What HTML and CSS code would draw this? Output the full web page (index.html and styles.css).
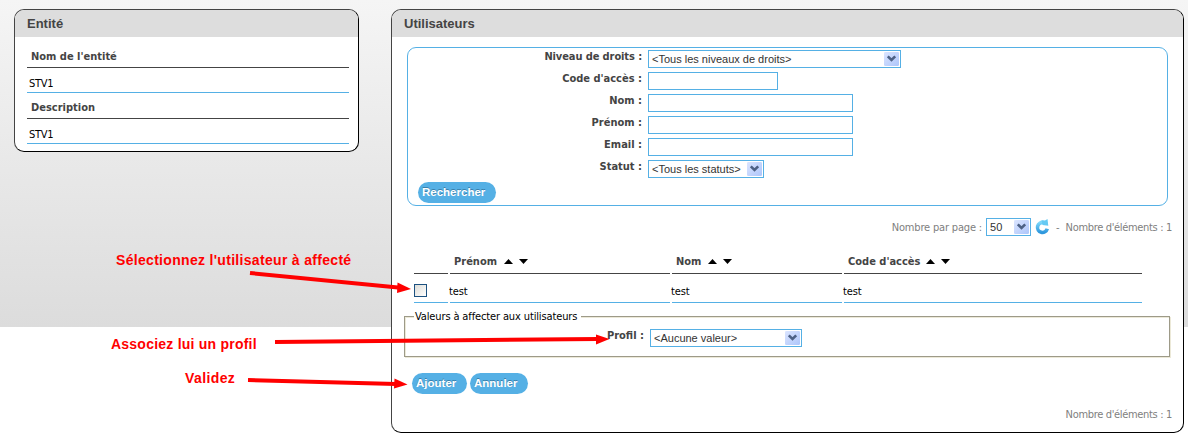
FILE: index.html
```html
<!DOCTYPE html>
<html lang="fr">
<head>
<meta charset="utf-8">
<title>Utilisateurs</title>
<link rel="stylesheet" href="styles.css">
</head>
<body>
<svg class="defs" width="0" height="0"><defs>
<linearGradient id="face" x1="0" y1="0" x2="1" y2="1"><stop offset="0" stop-color="#dbe5ff"/><stop offset="1" stop-color="#adc5fa"/></linearGradient>
<linearGradient id="blue" x1="0" y1="0" x2="0" y2="1"><stop offset="0" stop-color="#7ed7fa"/><stop offset="1" stop-color="#2f98dd"/></linearGradient>
<symbol id="drop" viewBox="0 0 15 14"><rect width="15" height="14" rx="1.2" fill="url(#face)"/><path d="M3.8 4.3 7.5 8l3.7-3.7" fill="none" stroke="#4d6185" stroke-width="2.6"/></symbol>
<symbol id="up" viewBox="0 0 9 5"><path d="M0 5 4.500 0 9 5z"/></symbol>
<symbol id="down" viewBox="0 0 9 5"><path d="M0 0h9L4.500 5z"/></symbol>
</defs></svg>
<main class="page">
  <section class="panel entity">
    <h2 class="title">Entité</h2>
    <dl class="facts">
      <dt>Nom de l'entité</dt><dd>STV1</dd>
      <dt>Description</dt><dd>STV1</dd>
    </dl>
  </section>
  <section class="panel users">
    <h2 class="title">Utilisateurs</h2>
    <div class="content">
      <form class="search">
        <div class="row"><label class="rights">Niveau de droits :</label><div class="select level"><span>&lt;Tous les niveaux de droits&gt;</span><svg><use href="#drop"/></svg></div></div>
        <div class="row"><label>Code d'accès :</label><div class="input short"></div></div>
        <div class="row"><label>Nom :</label><div class="input"></div></div>
        <div class="row"><label>Prénom :</label><div class="input"></div></div>
        <div class="row"><label>Email :</label><div class="input"></div></div>
        <div class="row"><label>Statut :</label><div class="select status"><span>&lt;Tous les statuts&gt;</span><svg><use href="#drop"/></svg></div></div>
        <div class="btn find">Rechercher</div>
      </form>
      <div class="pager"><span class="per-page">Nombre par page :</span><div class="select count"><span>50</span><svg><use href="#drop"/></svg></div>
        <svg class="refresh" viewBox="0 0 15 16"><path d="M8.500 3.500A5 5 0 1 0 12.300 9.800" fill="none" stroke="url(#blue)" stroke-width="3.600"/><path d="M6.500 1.200 10 1.600 12.500 0 13.300 6.800 7.500 6z" fill="#66caf3"/></svg>
        <span class="dash">-</span><span class="elements">Nombre d'éléments : 1</span></div>
      <div class="grid">
        <div class="th"></div>
        <div class="th"><span>Prénom</span><svg><use href="#up"/></svg><svg><use href="#down"/></svg></div>
        <div class="th"><span>Nom</span><svg><use href="#up"/></svg><svg><use href="#down"/></svg></div>
        <div class="th access"><span>Code d'accès</span><svg><use href="#up"/></svg><svg><use href="#down"/></svg></div>
        <div class="td"><span class="check"></span></div>
        <div class="td"><span class="value">test</span></div><div class="td"><span class="value">test</span></div><div class="td"><span class="value">test</span></div>
      </div>
      <div class="assign">
        <div class="legend">Valeurs à affecter aux utilisateurs</div>
        <div class="row"><label>Profil :</label><div class="select profile"><span>&lt;Aucune valeur&gt;</span><svg><use href="#drop"/></svg></div></div>
      </div>
      <div class="actions"><div class="btn add">Ajouter</div><div class="btn cancel">Annuler</div></div>
      <div class="total"><span class="elements">Nombre d'éléments : 1</span></div>
    </div>
  </section>
</main>
<div class="note select-note">Sélectionnez l'utilisateur à affecté</div>
<div class="note profile-note">Associez lui un profil</div>
<div class="note valid-note">Validez</div>
<svg class="arrows" viewBox="0 0 1188 442"><g fill="none" stroke="red" stroke-width="4"><path d="M250 273 398 287.500"/><path d="M275 342 598 339"/><path d="M248 380 396 384"/></g><g fill="red"><path d="M397.500 282.500 411 289 397 293z"/><path d="M596 334.500 609.500 339 596 344.500z"/><path d="M394.500 378.500 407.500 384.500 394 388.500z"/></g></svg>
</body>
</html>
```
FILE: styles.css
```css
* { box-sizing: border-box; }
body {
  margin: 0; width: 1188px; height: 442px; overflow: hidden; position: relative;
  background: #fff linear-gradient(#f5f5f5, #dcdcdc) no-repeat 0 0 / 100% 327px;
  font: 11px/14px "DejaVu Sans Condensed", "DejaVu Sans", sans-serif; font-stretch: condensed; color: #000;
}
span, label { white-space: nowrap; }
.defs { position: absolute; }
.page { display: flex; align-items: flex-start; gap: 32px; padding: 9px 0 0 14px; }
.panel { border: 1px solid #444; border-right-color: #000; border-bottom-color: #000; border-radius: 10px; background: #fff; overflow: hidden; }
.entity { width: 345px; height: 143px; }
.users { width: 793px; height: 424px; }
.title { margin: 0; height: 27px; padding: 0 12px; background: #ddd; color: #444; font: bold 13px/27px "Liberation Sans", Arial, sans-serif; }
.facts { margin: 0; padding: 8px 9px 0 12px; }
.facts dt { height: 23px; padding: 5px 4px 0; border-bottom: 1px solid #444; color: #444; font-weight: bold; }
.facts dd { margin: 0; height: 25px; padding: 9px 2px 0; border-bottom: 1px solid #55b0e5; letter-spacing: -.3px; }
.facts dt:nth-of-type(2) { height: 26px; padding-top: 8px; }
.content { padding: 10px 11px 0 12px; color: #808080; }
.search { width: 761px; height: 159px; margin-left: 3px; padding: 2px 10px; border: 1px solid #55b0e5; border-radius: 9px; }
.row { display: flex; height: 22px; }
.row label { width: 224px; margin: 0 6px 0 0; text-align: right; font-weight: bold; color: #444; }
.row .rights { letter-spacing: -.1px; }
.input, .select { height: 18px; border: 1px solid #55b0e5; background: #fff; }
.input { width: 205px; }
.short { width: 130px; }
.select { display: flex; align-items: center; justify-content: space-between; padding: 0 1px 0 3px; font: 11px/16px "Liberation Sans", Arial, sans-serif; color: #333; }
.select svg { width: 15px; height: 14px; flex: none; }
.level { width: 253px; }
.status { width: 116px; }
.count { width: 45px; }
.profile { width: 152px; }
.btn { height: 21px; padding-left: 4px; border-radius: 10.5px; background: #55b0e5; color: #fff; font: bold 11.5px/20px "Liberation Sans", Arial, sans-serif; text-shadow: 0 -1px 0 #397fab; }
.find { width: 78px; }
.add { width: 55px; }
.cancel { width: 58px; }
.pager { display: flex; align-items: center; justify-content: flex-end; height: 18px; margin-top: 12px; }
.pager > span { padding-top: 1px; }
.pager .count { margin-left: 4px; }
.per-page { letter-spacing: -.17px; }
.elements { letter-spacing: -.33px; }
.refresh { width: 15px; height: 16px; margin: 0 6px 0 4px; }
.dash { margin-right: 6px; }
.grid { display: grid; grid-template-columns: 34px 220px 170px 298px; column-gap: 2px; margin: 14px 0 0 10px; width: 728px; }
.th { display: flex; align-items: center; height: 24px; padding: 0 4px; border-bottom: 1px solid #444; font-weight: bold; color: #444; }
.th span { padding-top: 1px; }
.th svg { width: 9px; height: 5px; margin-left: 6px; fill: #000; }
.th svg:first-of-type { margin-left: 7px; }
.access svg:first-of-type { margin-left: 6px; }
.th svg { overflow: visible; }
.td { display: flex; height: 29px; padding-top: 10px; border-bottom: 1px solid #55b0e5; color: #000; }
.value { margin-top: 1px; margin-left: -1px; letter-spacing: -.1px; }
.check { width: 13px; height: 13px; border: 1px solid #1c5180; background: linear-gradient(135deg, #dcdcd7, #fff); }
.assign { height: 41px; width: 766px; margin-top: 13px; border: 1px solid #9d9a88; box-shadow: 1px 1px 0 #ece9d8, inset 1px 1px 0 #ece9d8; }
.legend { width: 167px; height: 14px; margin: -7px 0 5px 9px; padding-left: 1px; background: #fff; color: #000; letter-spacing: -.13px; white-space: nowrap; }
.assign .row label { width: 239px; }
.actions { display: flex; gap: 3px; margin: 16px 0 0 8px; }
.total { display: flex; justify-content: flex-end; margin-top: 14px; }
.note { position: absolute; color: red; font: bold 14px/18px "Liberation Sans", Arial, sans-serif; white-space: nowrap; }
.select-note { left: 116px; top: 251px; letter-spacing: .31px; }
.profile-note { left: 111px; top: 335px; letter-spacing: .23px; }
.valid-note { left: 185px; top: 369px; letter-spacing: .4px; }
.arrows { position: absolute; left: 0; top: 0; width: 1188px; height: 442px; }
```
